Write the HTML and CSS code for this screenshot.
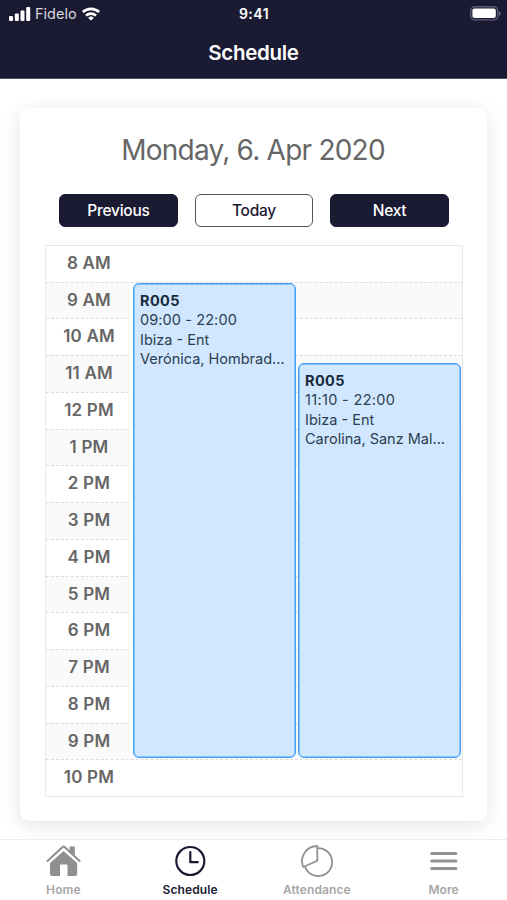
FILE: index.html
```html
<!DOCTYPE html>
<html lang="en">
<head>
<meta charset="utf-8">
<title>Schedule</title>
<link rel="stylesheet" href="styles.css">
</head>
<body>
<header class="header">
  <div class="status">
    <div class="carrier">
      <svg class="signal" width="22" height="14" viewBox="0 0 22 14" fill="#fff"><rect x="0" y="9" width="4" height="5" rx="1"/><rect x="5.8" y="6.5" width="4" height="7.5" rx="1"/><rect x="11.5" y="3.5" width="4" height="10.5" rx="1"/><rect x="17.2" y="0" width="4" height="14" rx="1"/></svg>
      <span class="carrier-name">Fidelo</span>
      <svg class="wifi" width="18" height="14" viewBox="0 0 18 14" fill="none" stroke="#fff" stroke-width="2.7"><path d="M.9 5.1a11.6 11.6 0 0 1 16.2 0M4 8.6a7.2 7.2 0 0 1 10 0"/><path d="M9 13.6 6.2 10.9a4 4 0 0 1 5.600 0z" fill="#fff" stroke="none"/></svg>
    </div>
    <span class="clock">9:41</span>
    <svg class="battery" width="31" height="15" viewBox="0 0 31 15"><rect x=".7" y=".7" width="27" height="13.2" rx="4" fill="none" stroke="#5c5b73" stroke-width="1.4"/><rect x="2.4" y="2.5" width="23.4" height="9.6" rx="2" fill="#fff"/><path d="M29 5c2 .8 2 4 0 4.8z" fill="#73728a"/></svg>
  </div>
  <h1 class="title">Schedule</h1>
</header>
<main class="main">
  <section class="card">
    <h2 class="date">Monday, 6. Apr 2020</h2>
    <div class="buttons">
      <button class="btn">Previous</button>
      <button class="btn btn-outline">Today</button>
      <button class="btn">Next</button>
    </div>
    <div class="calendar">
      <div class="row"><span class="hour">8 AM</span><span class="slot"></span></div>
      <div class="row"><span class="hour">9 AM</span><span class="slot"></span></div>
      <div class="row"><span class="hour">10 AM</span><span class="slot"></span></div>
      <div class="row"><span class="hour">11 AM</span><span class="slot"></span></div>
      <div class="row"><span class="hour">12 PM</span><span class="slot"></span></div>
      <div class="row"><span class="hour">1 PM</span><span class="slot"></span></div>
      <div class="row"><span class="hour">2 PM</span><span class="slot"></span></div>
      <div class="row"><span class="hour">3 PM</span><span class="slot"></span></div>
      <div class="row"><span class="hour">4 PM</span><span class="slot"></span></div>
      <div class="row"><span class="hour">5 PM</span><span class="slot"></span></div>
      <div class="row"><span class="hour">6 PM</span><span class="slot"></span></div>
      <div class="row"><span class="hour">7 PM</span><span class="slot"></span></div>
      <div class="row"><span class="hour">8 PM</span><span class="slot"></span></div>
      <div class="row"><span class="hour">9 PM</span><span class="slot"></span></div>
      <div class="row"><span class="hour">10 PM</span><span class="slot"></span></div>
      <div class="events">
        <article class="event">
          <strong class="room">R005</strong>
          <span class="line time">09:00 - 22:00</span>
          <span class="line">Ibiza - Ent</span>
          <span class="line">Verónica, Hombrad...</span>
        </article>
        <article class="event event-late">
          <strong class="room">R005</strong>
          <span class="line time-late">11:10 - 22:00</span>
          <span class="line">Ibiza - Ent</span>
          <span class="line">Carolina, Sanz Mal...</span>
        </article>
      </div>
    </div>
  </section>
</main>
<nav class="tabs">
  <a class="tab">
    <svg width="36" height="36" viewBox="0 0 36 36" fill="#8f8f8f"><path d="M18.500 8 32.200 20V31a2 2 0 0 1-2 2H22.500V22.500a1 1 0 0 0-1-1h-5.500a1 1 0 0 0-1 1V33H7a2 2 0 0 1-2-2V20z"/><path d="M2.500 18.800 18.500 4.500 34.500 18.800" fill="none" stroke="#fff" stroke-width="4.400"/><path d="M2.500 18 17.600 4a1.500 1.500 0 0 1 2 0L34.600 18" fill="none" stroke="#8f8f8f" stroke-width="2" stroke-linecap="round"/><path d="M24.600 3.500h5.200v10l-5.200-4.600z"/></svg>
    <span class="tab-label">Home</span>
  </a>
  <a class="tab tab-active">
    <svg width="36" height="36" viewBox="0 0 36 36" fill="none" stroke="#1b1a33" stroke-width="2.200"><circle cx="18.300" cy="18" r="14"/><path d="M18.300 9v10.200h7.500" stroke-linecap="round" stroke-linejoin="round"/></svg>
    <span class="tab-label">Schedule</span>
  </a>
  <a class="tab">
    <svg width="36" height="36" viewBox="0 0 36 36" fill="none" stroke="#919191" stroke-width="1.800" stroke-linejoin="round"><path d="M18.300 17.800V3A15.200 15.200 0 0 0 4.200 24z"/><path d="M18.300 5.100A14 14 0 1 1 5.800 23.300"/></svg>
    <span class="tab-label">Attendance</span>
  </a>
  <a class="tab">
    <svg width="36" height="36" viewBox="0 0 36 36" stroke="#919191" stroke-width="3.200" stroke-linecap="round"><path d="M5.800 10.500h24M5.800 18h24M5.800 25.500h24"/></svg>
    <span class="tab-label">More</span>
  </a>
</nav>
</body>
</html>
```
FILE: styles.css
```css
* { box-sizing: border-box; }
body {
  margin: 0;
  height: 900px;
  display: flex;
  flex-direction: column;
  overflow: hidden;
  background: #fff;
  font-family: Inter, "Liberation Sans", sans-serif;
}
.header {
  height: 79px;
  flex: none;
  background: #1b1a33;
  border-bottom: 1px solid #55546c;
  color: #fff;
}
.status {
  display: grid;
  grid-template-columns: 1fr auto 1fr;
  align-items: center;
  height: 27px;
  padding: 0 8px 0 9px;
}
.carrier { display: flex; align-items: center; }
.carrier-name { margin-left: 4px; font-size: 14.500px; color: #d7d7df; line-height: 27px; }
.wifi { margin-left: 5px; }
.clock { font-size: 14px; font-weight: 600; letter-spacing: .5px; }
.battery { justify-self: end; margin-right: -2px; }
.title {
  margin: 10px 0 0;
  text-align: center;
  font-size: 20.500px;
  line-height: 32px;
  font-weight: 600;
  letter-spacing: -.3px;
}
.main { height: 760px; flex: none; padding: 29px 20px 0; overflow: hidden; }
.card {
  height: 713px;
  padding: 24px 24px 0 25px;
  border-radius: 9px;
  background: #fff;
  box-shadow: 0 4px 20px rgba(0, 0, 0, .11);
}
.date {
  margin: 0 2px 0 0;
  text-align: center;
  white-space: nowrap;
  color: #666;
  font-size: 28px;
  line-height: 36px;
  font-weight: 400;
  letter-spacing: -.77px;
}
.buttons { display: flex; justify-content: center; gap: 17px; margin-top: 26px; }
.btn {
  width: 118.500px;
  height: 33px;
  padding: 0;
  border: 1.500px solid #1b1a33;
  border-radius: 6px;
  background: #1b1a33;
  color: #fff;
  font: 500 15.500px/31px Inter, sans-serif;
  letter-spacing: -.25px;
}
.btn-outline { background: #fff; color: #1b1a33; border-color: #53525f; }
.calendar {
  position: relative;
  margin-top: 18px;
  height: 552px;
  display: flex;
  flex-direction: column;
  border: 1.500px solid #e8e8e8;
}
.row { flex: 1; display: flex; border-top: 1px dashed #ddd; }
.row:first-child { flex: 0 0 35.500px; border-top: 0; }
.row:nth-child(even) { background: #fafafa; }
.hour {
  width: 86px;
  text-align: center;
  font-size: 17px;
  line-height: 34px;
  font-weight: 600;
  letter-spacing: .2px;
  color: #666;
}
.slot { flex: 1; }
.events {
  position: absolute;
  inset: 37px 1px 38px 84px;
  display: flex;
  align-items: flex-end;
  gap: 2px;
  background: linear-gradient(#fff, #fff) left / 3px 100% no-repeat;
  padding-left: 3px;
}
.event {
  flex: 1;
  min-width: 0;
  height: 475px;
  padding: 6.500px 6px 0;
  overflow: hidden;
  border: 1px solid #42a0f8;
  box-shadow: inset 0 0 0 .5px #42a0f8;
  border-radius: 6px;
  background: #d0e7ff;
  color: #2c3e50;
  font-size: 14.500px;
  line-height: 19.500px;
  white-space: nowrap;
}
.event-late { height: 395px; }
.room, .line { display: block; }
.room { color: #182b3b; font-weight: 700; letter-spacing: .4px; }
.time { letter-spacing: .1px; }
.time-late { letter-spacing: .33px; }
.tabs {
  flex: none;
  height: 61px;
  display: grid;
  grid-template-columns: repeat(4, 1fr);
  border-top: 1px solid #ececec;
  background: #fff;
}
.tab {
  display: flex;
  flex-direction: column;
  align-items: center;
  padding-top: 3px;
  color: #a6a6a6;
}
.tab svg { display: block; }
.tab-label { font-size: 12px; line-height: 16px; margin-top: 3px; font-weight: 600; letter-spacing: .1px; }
.tab-active { color: #1b1a33; }
```
